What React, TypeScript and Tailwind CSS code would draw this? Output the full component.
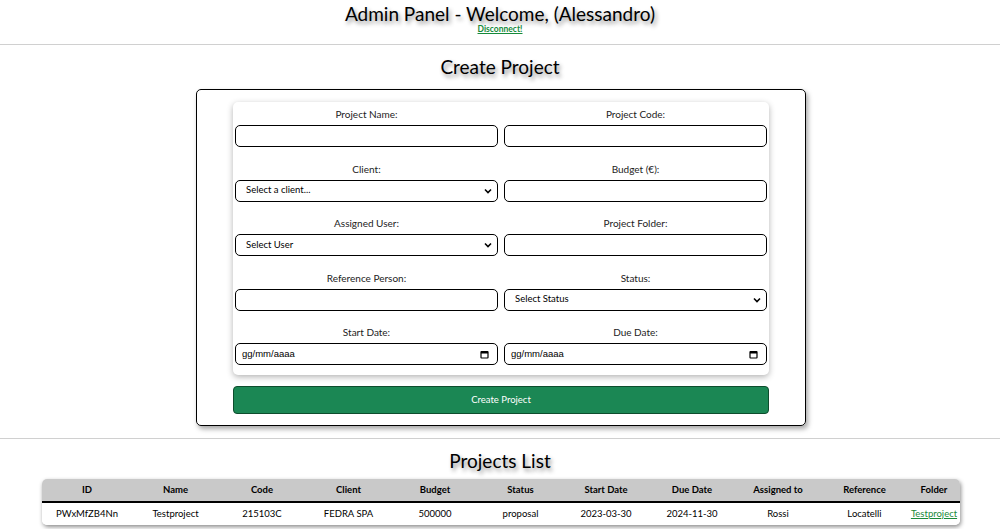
import { ReactNode } from 'react';

const font = { fontFamily: 'Lato, "Open Sans", sans-serif' };

function Label({ children }: { children: ReactNode }) {
	return <div className="h-[12px] text-center text-[10px] leading-[12px] text-[#222]">{children}</div>;
}

function TextField({ label }: { label: string }) {
	return (
		<div className="flex flex-col">
			<Label>{label}</Label>
			<input className="mt-[5px] h-[22px] w-full rounded-[5px] border border-black bg-white px-2 text-[10px] outline-none" />
		</div>
	);
}

function SelectField({ label, placeholder }: { label: string; placeholder: string }) {
	return (
		<div className="flex flex-col">
			<Label>{label}</Label>
			<div className="mt-[5px] flex h-[22px] items-center justify-between rounded-[5px] border border-black bg-white pl-[10px] pr-[5px]">
				<span className="text-[9.5px] text-black">{placeholder}</span>
				<svg width="8" height="6" viewBox="0 0 8 6" fill="none">
					<path d="M1 1.5 L4 4.5 L7 1.5" stroke="black" strokeWidth="1.6" />
				</svg>
			</div>
		</div>
	);
}

function DateField({ label }: { label: string }) {
	return (
		<div className="flex flex-col">
			<Label>{label}</Label>
			<div className="mt-[5px] flex h-[22px] items-center justify-between rounded-[5px] border border-black bg-white pl-[6px] pr-[8px]">
				<span className="text-[9.5px] text-black" style={{ fontFamily: '"Liberation Sans", Arial, sans-serif' }}>
					gg/mm/aaaa
				</span>
				<svg width="9" height="9" viewBox="0 0 9 9" fill="none">
					<rect x="1" y="1.5" width="7" height="6.5" rx="0.5" stroke="black" strokeWidth="1.2" />
					<rect x="1" y="1.5" width="7" height="2" fill="black" />
				</svg>
			</div>
		</div>
	);
}

const cols = [
	{ h: 'ID', w: 90, v: 'PWxMfZB4Nn' },
	{ h: 'Name', w: 87, v: 'Testproject' },
	{ h: 'Code', w: 86, v: '215103C' },
	{ h: 'Client', w: 87, v: 'FEDRA SPA' },
	{ h: 'Budget', w: 86, v: '500000' },
	{ h: 'Status', w: 85, v: 'proposal' },
	{ h: 'Start Date', w: 86, v: '2023-03-30' },
	{ h: 'Due Date', w: 86, v: '2024-11-30' },
	{ h: 'Assigned to', w: 86, v: 'Rossi' },
	{ h: 'Reference', w: 87, v: 'Locatelli' },
	{ h: 'Folder', w: 52, v: 'Testproject' },
];

const shadowText = { textShadow: '2px 3px 4px rgba(0,0,0,0.45)' };

export default function App() {
	return (
		<div className="min-h-[529px] w-[1000px] bg-white text-black" style={font}>
			<header className="flex flex-col items-center pt-[2px]">
				<h1 className="text-[19px] leading-[24px]" style={shadowText}>
					Admin Panel - Welcome, (Alessandro)
				</h1>
				<a href="#" className="mt-[-2px] text-[8.5px] font-bold leading-[10px] text-[#158a3a] underline">
					Disconnect!
				</a>
			</header>
			<hr className="mt-[10px] border-t border-[#d0d0d0]" />

			<h2 className="mt-[10px] text-center text-[19px] leading-[24px]" style={shadowText}>
				Create Project
			</h2>

			<div className="ml-[196px] mt-[10px] w-[610px] rounded-[5px] border border-black px-[36px] pt-[12px] pb-[11px] shadow-[2px_3px_5px_rgba(0,0,0,0.35)]">
				<div className="grid grid-cols-2 gap-x-[6px] gap-y-[15.5px] rounded-[5px] bg-white px-[2px] pt-[6px] pb-[10px] shadow-[0_2px_6px_rgba(0,0,0,0.3)]">
					<TextField label="Project Name:" />
					<TextField label="Project Code:" />
					<SelectField label="Client:" placeholder="Select a client..." />
					<TextField label="Budget (€):" />
					<SelectField label="Assigned User:" placeholder="Select User" />
					<TextField label="Project Folder:" />
					<TextField label="Reference Person:" />
					<SelectField label="Status:" placeholder="Select Status" />
					<DateField label="Start Date:" />
					<DateField label="Due Date:" />
				</div>
				<button className="mt-[11px] h-[28px] w-full rounded-[4px] border border-[#0d4d2d] bg-[#1b8754] text-[9.5px] text-white">
					Create Project
				</button>
			</div>

			<hr className="mt-[12px] border-t border-[#d0d0d0]" />

			<h2 className="mt-[10px] text-center text-[19px] leading-[24px]" style={shadowText}>
				Projects List
			</h2>

			<div className="mx-auto mt-[6px] w-[918px] translate-x-[1px] overflow-hidden rounded-[5px] shadow-[1px_2px_4px_rgba(0,0,0,0.45)]">
				<table className="w-full table-fixed border-collapse text-[9.5px]">
					<colgroup>
						{cols.map((c) => (
							<col key={c.h} style={{ width: c.w }} />
						))}
					</colgroup>
					<thead>
						<tr className="h-[23px] border-b-2 border-black bg-[#c9c9c9]">
							{cols.map((c) => (
								<th key={c.h} className="font-bold">
									{c.h}
								</th>
							))}
						</tr>
					</thead>
					<tbody>
						<tr className="h-[23px] bg-white">
							{cols.map((c, i) =>
								i === cols.length - 1 ? (
									<td key={c.h} className="text-center">
										<a href="#" className="text-[#1a8a3a] underline">
											{c.v}
										</a>
									</td>
								) : (
									<td key={c.h} className="text-center">
										{c.v}
									</td>
								)
							)}
						</tr>
					</tbody>
				</table>
			</div>
		</div>
	);
}
